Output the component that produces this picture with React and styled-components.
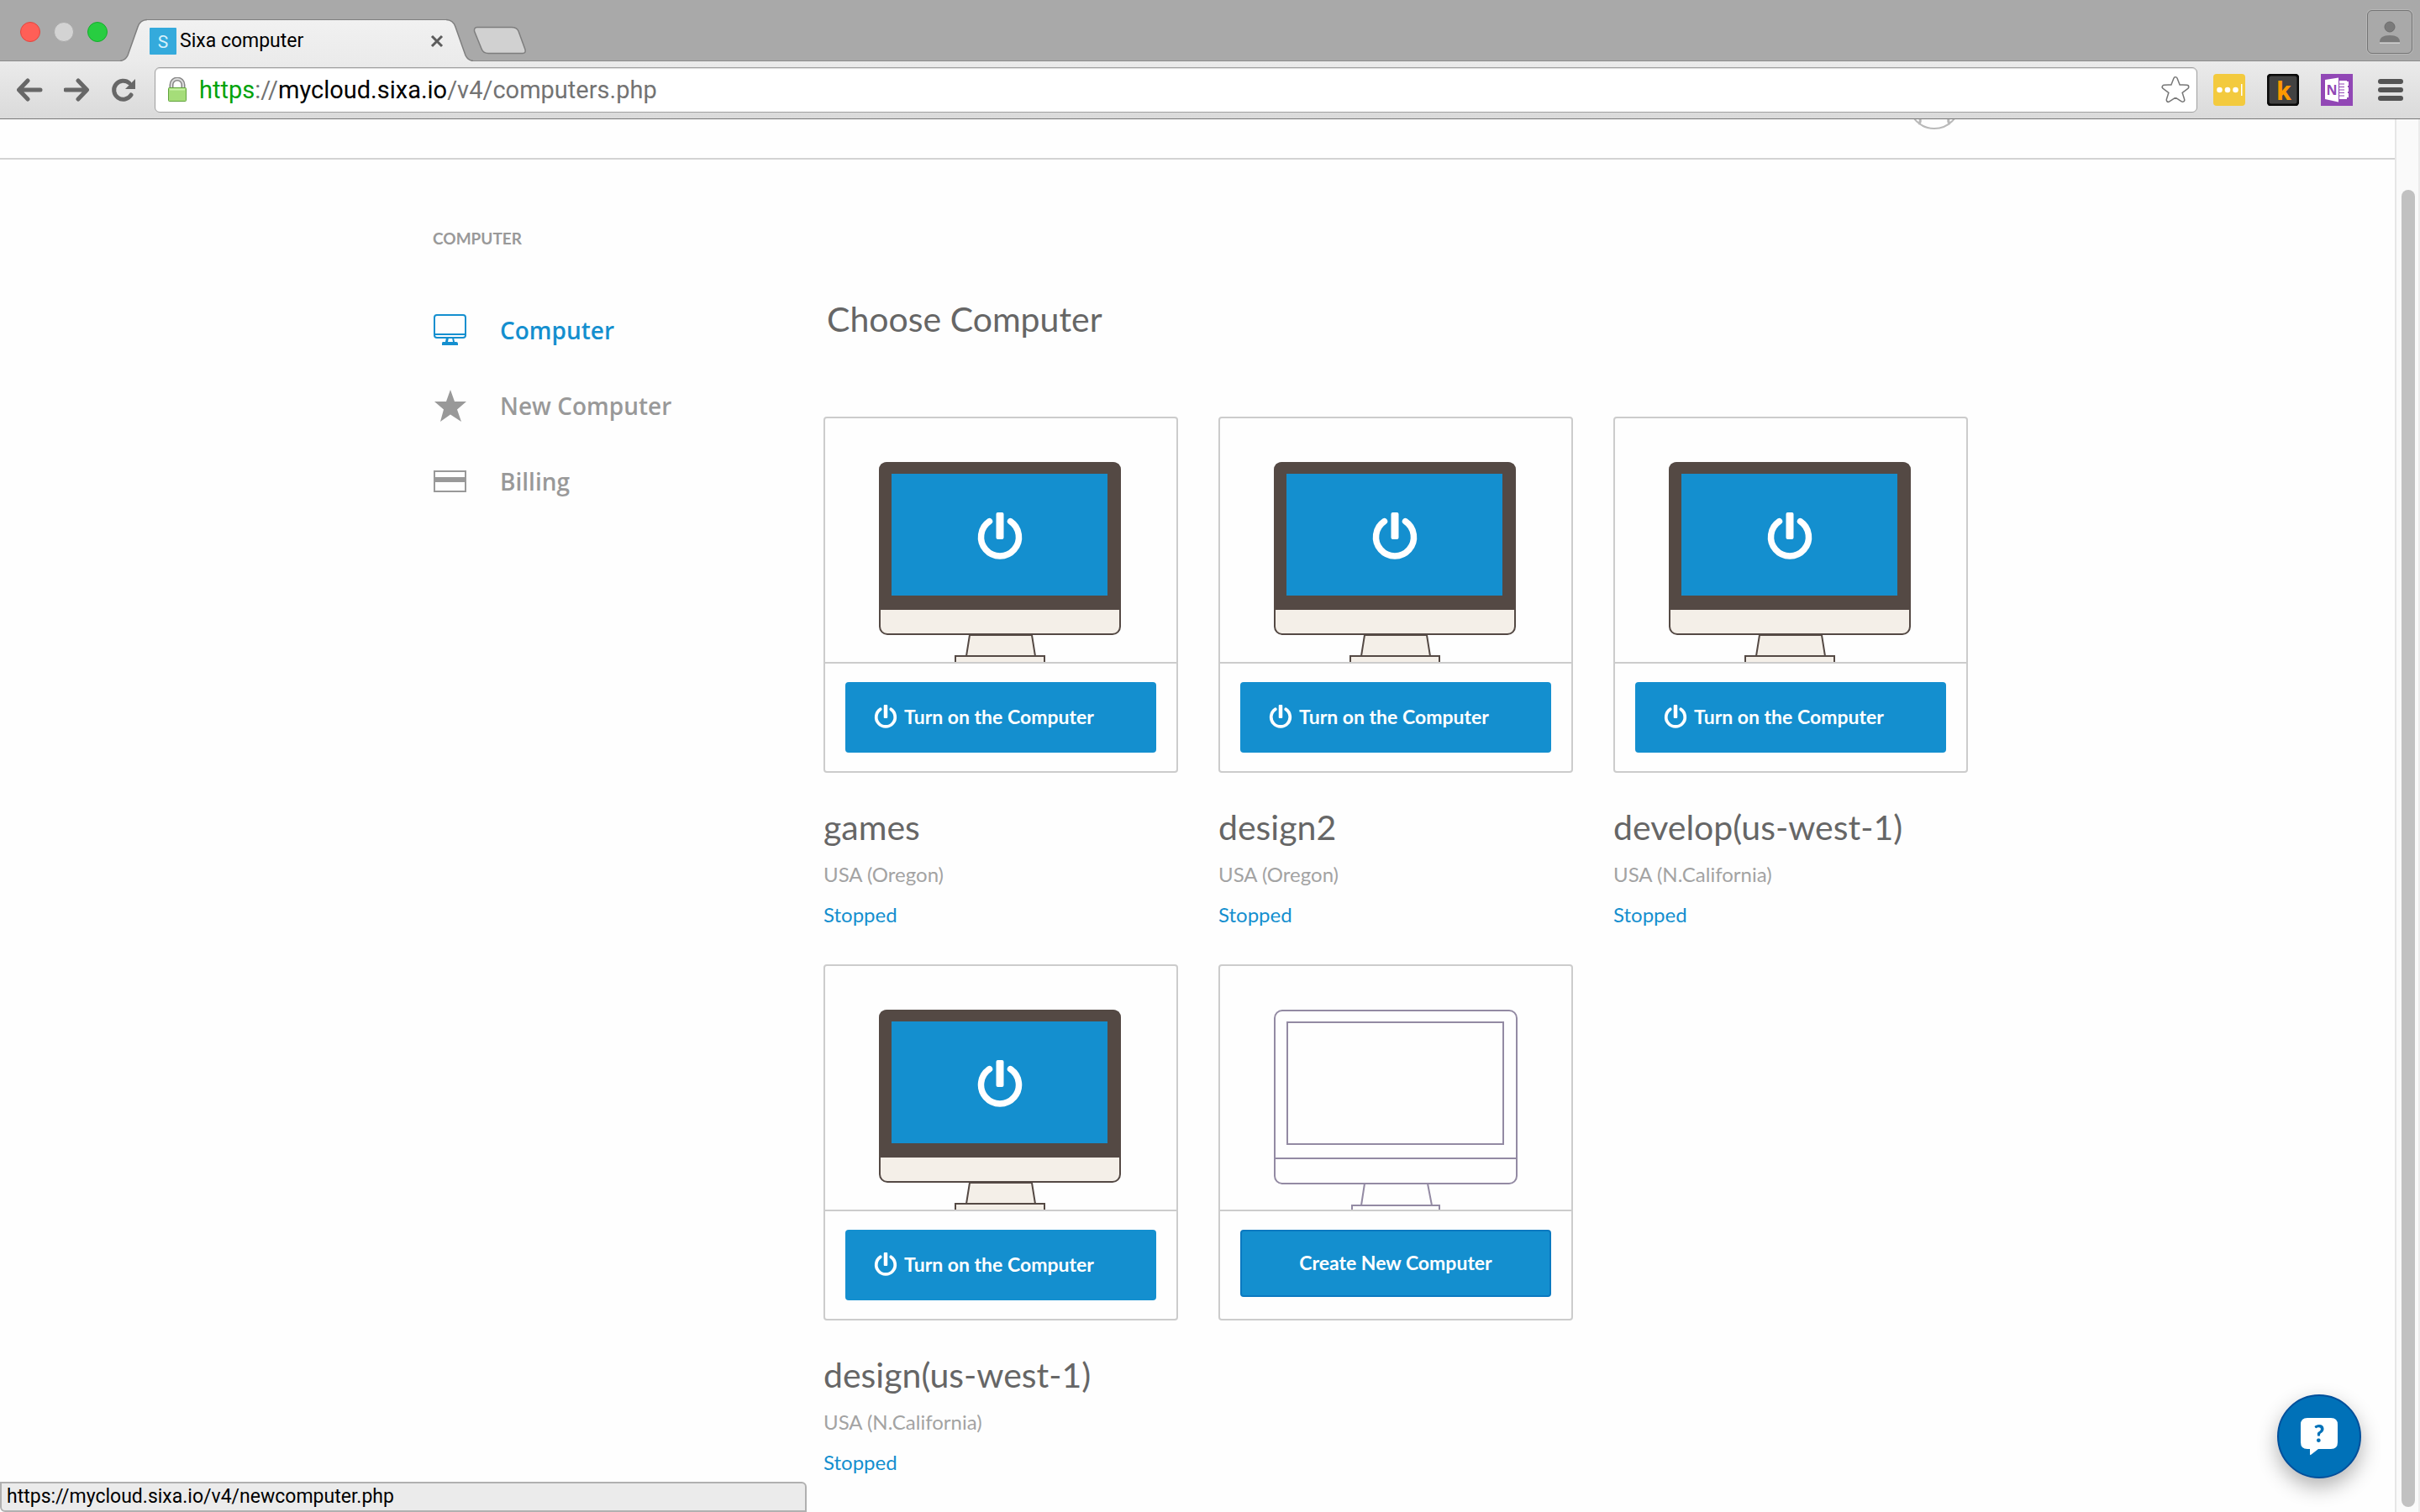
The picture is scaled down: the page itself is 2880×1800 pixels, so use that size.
import React from "react"
import styled, { createGlobalStyle } from "styled-components"

const computers = [
  { name: "games", region: "USA (Oregon)", status: "Stopped" },
  { name: "design2", region: "USA (Oregon)", status: "Stopped" },
  { name: "develop(us-west-1)", region: "USA (N.California)", status: "Stopped" },
  { name: "design(us-west-1)", region: "USA (N.California)", status: "Stopped" },
]

const App = () => {
  return (
    <Window>
      <GlobalStyle />
      <TabStrip>
        <Lights>
          <Light aria-label="Close window" color="#ff5f57" $edge="#e2463f" />
          <Light aria-label="Minimize window" color="#d3d3d3" $edge="#a9a9a9" />
          <Light aria-label="Zoom window" color="#28cd41" $edge="#14ae2c" />
        </Lights>
        <Tab>
          <TabEdge />
          <TabBody>
            <Favicon />
            <TabTitle>Sixa computer</TabTitle>
            <IconButton aria-label="Close tab">
              <svg width="16" height="16" viewBox="0 0 16 16">
                <path d="M2 2L14 14M14 2L2 14" stroke="#5c5c5c" strokeWidth="3" />
              </svg>
            </IconButton>
          </TabBody>
          <TabEdge right />
        </Tab>
        <NewTab aria-label="New tab">
          <svg width="64" height="34" viewBox="0 0 64 34">
            <path
              d="M5 1.500H46Q52 1.500 54 6L62 28Q63 32.500 59 32.500H18Q12 32.500 10 27L1.500 6Q1 1.500 5 1.500Z"
              fill="#d1d1d1"
              stroke="#7e7e7e"
              strokeWidth="1.500"
            />
          </svg>
        </NewTab>
        <Profile aria-label="Profile">
          <svg width="28" height="28" viewBox="0 0 28 28">
            <path d="M2 27.500H26" stroke="#d0d0d0" strokeWidth="1.500" />
            <circle cx="14" cy="8" r="6" fill="#7a7a7a" stroke="#6c6c6c" />
            <path d="M2 26Q2 18 14 18T26 26Z" fill="#7a7a7a" />
          </svg>
        </Profile>
      </TabStrip>

      <Toolbar>
        <NavButtons>
          <IconButton aria-label="Back">
            <ArrowIcon />
          </IconButton>
          <IconButton aria-label="Forward">
            <ArrowIcon forward />
          </IconButton>
          <IconButton aria-label="Reload">
            <ReloadIcon />
          </IconButton>
        </NavButtons>
        <AddressBar>
          <LockIcon />
          <Url role="textbox" aria-label="Address" tabIndex={0}>
            <Scheme>https</Scheme>://<Host>mycloud.sixa.io</Host>/v4/computers.php
          </Url>
          <IconButton aria-label="Bookmark this page">
            <BookmarkIcon />
          </IconButton>
        </AddressBar>
        <Extensions>
          <IconButton aria-label="Passwords">
            <PasswordsIcon />
          </IconButton>
          <IconButton aria-label="Kindle">
            <KindleIcon />
          </IconButton>
          <IconButton aria-label="OneNote">
            <OneNoteIcon />
          </IconButton>
          <IconButton aria-label="Menu">
            <MenuIcon />
          </IconButton>
        </Extensions>
      </Toolbar>

      <Viewport>
        <Page>
          <PageHeader>
            <AvatarIcon />
          </PageHeader>
          <Container>
            <Sidebar>
              <SidebarTitle>COMPUTER</SidebarTitle>
              <NavItem href="#computer" $active>
                <MonitorIcon />
                Computer
              </NavItem>
              <NavItem href="#new">
                <StarIcon />
                New Computer
              </NavItem>
              <NavItem href="#billing">
                <CardIcon />
                Billing
              </NavItem>
            </Sidebar>
            <Main>
              <Heading>Choose Computer</Heading>
              <Grid>
                {computers.map(c => (
                  <article key={c.name}>
                    <Card>
                      <CardPicture>
                        <ComputerPicture />
                      </CardPicture>
                      <CardFooter>
                        <PowerButton>
                          <PowerIcon size={28} />
                          Turn on the Computer
                        </PowerButton>
                      </CardFooter>
                    </Card>
                    <Name>{c.name}</Name>
                    <Meta>{c.region}</Meta>
                    <Meta $status>{c.status}</Meta>
                  </article>
                ))}
                <article>
                  <Card>
                    <CardPicture>
                      <EmptyPicture />
                    </CardPicture>
                    <CardFooter>
                      <CreateButton>Create New Computer</CreateButton>
                    </CardFooter>
                  </Card>
                </article>
              </Grid>
            </Main>
          </Container>
        </Page>
        <ScrollTrack>
          <ScrollThumb />
        </ScrollTrack>
      </Viewport>

      <ChatButton aria-label="Help">
        <svg width="46" height="46" viewBox="0 0 46 46">
          <path
            d="M9 1H37Q45 1 45 9V30Q45 38 37 38H22L13 45Q12 45.500 12 44V38H9Q1 38 1 30V9Q1 1 9 1Z"
            fill="#fff"
          />
          <text
            x="23"
            y="30"
            textAnchor="middle"
            fontFamily="Lato, sans-serif"
            fontWeight="900"
            fontSize="28"
            fill="#0071b8"
          >
            ?
          </text>
        </svg>
      </ChatButton>
      <StatusBar>https://mycloud.sixa.io/v4/newcomputer.php</StatusBar>
    </Window>
  )
}

export default App

// browser icons

const TabEdge = ({ right }) => (
  <svg width="32" height="51" viewBox="0 0 32 51">
    <defs>
      <linearGradient id="tabFill" x1="0" y1="0" x2="0" y2="1">
        <stop offset="0" stopColor="#f1f1f1" />
        <stop offset="1" stopColor="#ebebeb" />
      </linearGradient>
    </defs>
    <g transform={right ? "translate(32 0) scale(-1 1)" : undefined}>
      <path d="M0 51C5 50 7 48 9 44L21 10C23 4 26 1 32 1V51Z" fill="url(#tabFill)" />
      <path
        d="M0 50.500C5 50 7 48 9 44L21 10C23 4 26 1.500 32 1.500"
        fill="none"
        stroke="#7f7f7f"
        strokeWidth="1.500"
      />
    </g>
  </svg>
)

const Favicon = () => (
  <svg width="32" height="32" viewBox="0 0 32 32">
    <rect width="32" height="32" rx="1" fill="#34aadc" />
    <text
      x="16"
      y="24"
      textAnchor="middle"
      fontFamily="Roboto, sans-serif"
      fontSize="21"
      fill="#d8f1fb"
    >
      S
    </text>
  </svg>
)

const ArrowIcon = ({ forward }) => (
  <svg width="32" height="30" viewBox="0 0 32 30">
    <path
      d={forward ? "M2 15H27M17 4L27.500 15L17 26" : "M28 15H3M13 4L2.500 15L13 26"}
      fill="none"
      stroke="#676767"
      strokeWidth="5"
      strokeLinecap="round"
      strokeLinejoin="round"
    />
  </svg>
)

const ReloadIcon = () => (
  <svg width="30" height="30" viewBox="0 0 30 30">
    <path
      d="M24 21A11 11 0 1 1 22 7"
      fill="none"
      stroke="#676767"
      strokeWidth="5"
      strokeLinecap="round"
    />
    <path d="M29 2V14H17Z" fill="#676767" />
  </svg>
)

const LockIcon = () => (
  <svg width="24" height="30" viewBox="0 0 24 30">
    <path d="M5 13V9A7 7 0 0 1 19 9V13" fill="none" stroke="#858585" strokeWidth="5" />
    <path d="M5 13V9A7 7 0 0 1 19 9V13" fill="none" stroke="#dcdcdc" strokeWidth="2" />
    <rect x="1.500" y="12.500" width="21" height="16" rx="1" fill="#a5dd79" stroke="#61a33d" />
    <path d="M3 14.500H21" stroke="#c9f3a8" strokeWidth="2" />
  </svg>
)

const STAR = "M19 6L22.500 15L32.500 15.500L24.500 21.500L27.500 31L19 25.500L10.500 31L13.500 21.500L5.500 15.500L15.500 15Z"

const BookmarkIcon = () => (
  <svg width="38" height="38" viewBox="0 0 38 38" strokeLinejoin="round">
    <path d={STAR} fill="#777" stroke="#777" strokeWidth="6" />
    <path d={STAR} fill="#fff" stroke="#fff" strokeWidth="3" />
  </svg>
)

const PasswordsIcon = () => (
  <svg width="38" height="38" viewBox="0 0 38 38">
    <rect width="38" height="38" rx="4" fill="#f3ca3e" />
    <circle cx="7.500" cy="19" r="3.300" fill="#fff" />
    <circle cx="17" cy="19" r="3.300" fill="#fff" />
    <circle cx="26.500" cy="19" r="3.300" fill="#fff" />
    <rect x="33" y="12" width="1.500" height="14" fill="#fff" />
  </svg>
)

const KindleIcon = () => (
  <svg width="38" height="38" viewBox="0 0 38 38">
    <rect x="1" y="1" width="36" height="36" rx="4" fill="#424242" stroke="#0a0a0a" strokeWidth="3" />
    <text
      x="20"
      y="31"
      textAnchor="middle"
      fontFamily="Roboto, sans-serif"
      fontWeight="700"
      fontSize="32"
      fill="#f90"
    >
      k
    </text>
  </svg>
)

const OneNoteIcon = () => (
  <svg width="38" height="38" viewBox="0 0 38 38">
    <rect width="38" height="38" fill="#9147b5" />
    <path d="M22 8H31V30H22Z" fill="#fff" />
    <path d="M31 9H33V14H32V16H33V21H32V23H33V28H31Z" fill="#fff" />
    <path d="M22 12H28M22 15.500H28M22 19H28M22 22.500H28M22 26H28" stroke="#9147b5" strokeWidth="1.200" />
    <path d="M5 7L21 4.500V33.500L5 30Z" fill="#fff" />
    <text
      x="13"
      y="25"
      textAnchor="middle"
      fontFamily="'Open Sans', sans-serif"
      fontWeight="700"
      fontSize="16"
      fill="#9147b5"
    >
      N
    </text>
  </svg>
)

const MenuIcon = () => (
  <svg width="30" height="26" viewBox="0 0 30 26">
    <rect width="30" height="6" rx="3" fill="#545454" />
    <rect y="10" width="30" height="6" rx="3" fill="#545454" />
    <rect y="20" width="30" height="6" rx="3" fill="#545454" />
  </svg>
)

// page icons

const AvatarIcon = () => (
  <svg width="62" height="13" viewBox="0 0 62 13" fill="none" stroke="#b9b9b9">
    <circle cx="31" cy="-19" r="30" strokeWidth="2" />
    <path d="M14 0Q15 4 12 5M48 0Q47 4 50 5" strokeWidth="3" />
  </svg>
)

const MonitorIcon = () => (
  <svg width="40" height="38" viewBox="0 0 40 38">
    <rect x="2" y="1" width="37" height="27" rx="3" fill="none" stroke="#148fcf" strokeWidth="2" />
    <path d="M2 24H39" stroke="#148fcf" strokeWidth="2" />
    <path d="M16 28L15 33H12Q11 33 11 35V37H30V35Q30 33 28 33H26L25 28H23L24 33H18L19 28Z" fill="#148fcf" />
  </svg>
)

const StarIcon = () => (
  <svg width="40" height="40" viewBox="0 0 40 40">
    <path d="M21 1L26 15H40L29 24.500L34 39L21 30.500L9 39L13 24.500L2 15H16Z" fill="#999" />
  </svg>
)

const CardIcon = () => (
  <svg width="40" height="26" viewBox="0 0 40 26">
    <rect x="2" y="1" width="37" height="24" fill="none" stroke="#999" strokeWidth="2" />
    <rect x="2" y="8" width="37" height="6" fill="#999" />
  </svg>
)

const PowerIcon = ({ size }) => (
  <svg width={size} height={size} viewBox="0 0 56 56">
    <path
      d="M15.500 10.700A22.500 22.500 0 1 0 40.500 10.700"
      fill="none"
      stroke="#fff"
      strokeWidth="7.500"
      strokeLinecap="round"
    />
    <rect x="23.500" y="0" width="9" height="32" rx="2" fill="#fff" />
  </svg>
)

const ComputerPicture = () => (
  <svg width="288" height="238" viewBox="0 0 288 238">
    <path d="M108 206L104 231H186L182 206Z" fill="#f4efe8" stroke="#544944" strokeWidth="2" />
    <rect x="91" y="231" width="106" height="20" fill="#f4efe8" stroke="#544944" strokeWidth="2" />
    <rect x="1" y="1" width="286" height="204" rx="9" fill="#f4efe8" stroke="#544944" strokeWidth="2" />
    <path d="M0 176V10Q0 0 10 0H278Q288 0 288 10V176Z" fill="#544944" />
    <rect x="15" y="14" width="257" height="145" fill="#148fcf" />
    <svg x="116" y="60" width="56" height="56">
      <PowerIcon size={56} />
    </svg>
  </svg>
)

const EmptyPicture = () => (
  <svg width="290" height="238" viewBox="0 0 290 238" fill="none" stroke="#938aa3" strokeWidth="2">
    <rect x="1" y="1" width="288" height="206" rx="9" />
    <rect x="16" y="15" width="257" height="145" />
    <path d="M1 177H289M108 207L104 233M183 207L188 233" />
    <rect x="93" y="233" width="104" height="20" />
  </svg>
)

const GlobalStyle = createGlobalStyle`
  * {
    box-sizing: border-box;
  }

  body {
    margin: 0;
    font-family: Lato, "Open Sans", sans-serif;
    background: #fefefe;
  }

  svg {
    display: block;
    flex: none;
  }

  button {
    font-family: inherit;
    cursor: pointer;
  }
`

const Window = styled.div`
  display: flex;
  flex-direction: column;
  height: 100vh;
  overflow: hidden;
`

const TabStrip = styled.header`
  display: flex;
  flex: none;
  align-items: flex-end;
  height: 72px;
  padding-right: 9px;
  background: #a9a9a9;
`

const Lights = styled.div`
  display: flex;
  gap: 16px;
  padding: 0 15px 22px 24px;
`

const Light = styled.button`
  width: 24px;
  height: 24px;
  padding: 0;
  border: 1px solid ${props => props.$edge};
  border-radius: 50%;
  background: ${props => props.color};
`

const Tab = styled.div`
  display: flex;
  z-index: 1;
  margin-bottom: -1px;
  font-family: Roboto, sans-serif;
`

const TabBody = styled.div`
  display: flex;
  align-items: center;
  width: 356px;
  height: 50px;
  margin-top: 1px;
  padding: 0 3px;
  border-top: 1px solid #7f7f7f;
  background: linear-gradient(#f1f1f1, #ebebeb);
`

const TabTitle = styled.span`
  flex: 1;
  padding-left: 4px;
  font-size: 23px;
  line-height: 32px;
  color: #000;
`

const IconButton = styled.button`
  display: flex;
  padding: 0;
  border: 0;
  background: none;
`

const NewTab = styled(IconButton)`
  padding-bottom: 7px;
`

const Profile = styled(IconButton)`
  align-items: center;
  justify-content: center;
  width: 54px;
  height: 52px;
  margin: 0 0 8px auto;
  border: 1px solid #757575;
  border-radius: 6px;
  box-shadow: 0 0 0 1px #b8b8b8;
`

const Toolbar = styled.div`
  display: flex;
  flex: none;
  align-items: center;
  height: 70px;
  padding: 0 20px;
  border-top: 1px solid #8b8b8b;
  border-bottom: 1px solid #777;
  background: linear-gradient(#ebebeb, #dadada);
`

const NavButtons = styled.div`
  display: flex;
  align-items: center;
  gap: 24px;
  padding-right: 22px;
`

const AddressBar = styled.div`
  display: flex;
  flex: 1;
  align-items: center;
  height: 54px;
  padding: 0 6px 0 14px;
  border: 1px solid #a0a0a0;
  border-radius: 6px;
  background: #fff;
  box-shadow: inset 0 1px 1px #ddd;
`

const Url = styled.div`
  flex: 1;
  padding-left: 14px;
  font-family: Roboto, sans-serif;
  font-size: 29px;
  line-height: 40px;
  color: #737373;
`

const Scheme = styled.span`
  color: #00a30a;
`

const Host = styled.span`
  color: #000;
`

const Extensions = styled.div`
  display: flex;
  align-items: center;
  gap: 26px;
  padding-left: 19px;

  button:last-child {
    padding-left: 4px;
  }
`

const Viewport = styled.div`
  display: flex;
  flex: 1;
  min-height: 0;
`

const Page = styled.div`
  flex: 1;
  overflow: hidden;
`

const PageHeader = styled.div`
  display: flex;
  justify-content: flex-end;
  height: 48px;
  padding-right: 517px;
  border-bottom: 2px solid #d3d3d3;
`

const Container = styled.div`
  display: flex;
  max-width: 1836px;
  margin: 0 auto;
  padding-left: 8px;
`

const Sidebar = styled.nav`
  flex: 0 0 465px;
  padding-top: 82px;
`

const SidebarTitle = styled.h2`
  margin: 0 0 52px;
  font-size: 19px;
  line-height: 24px;
  font-weight: 700;
  color: #999;
`

const NavItem = styled.a`
  display: flex;
  align-items: center;
  gap: 40px;
  height: 90px;
  font-family: "Open Sans", sans-serif;
  font-size: 28px;
  font-weight: 600;
  color: ${props => (props.$active ? "#148fcf" : "#999")};
  text-decoration: none;
`

const Main = styled.main`
  flex: 1;
  padding-top: 164px;
`

const Heading = styled.h1`
  margin: 0 0 90px;
  padding-left: 4px;
  font-size: 41px;
  line-height: 52px;
  font-weight: 400;
  color: #666;
`

const Grid = styled.div`
  display: grid;
  grid-template-columns: repeat(auto-fill, 422px);
  gap: 35px 48px;
`

const Card = styled.div`
  border: 2px solid #ccc;
  border-radius: 4px;
`

const CardPicture = styled.div`
  padding: 52px 0 0 64px;
  border-bottom: 2px solid #ccc;
`

const CardFooter = styled.div`
  height: 128px;
  padding: 22px 24px;
`

const PowerButton = styled.button`
  display: flex;
  align-items: center;
  gap: 8px;
  width: 100%;
  height: 84px;
  padding: 0 34px 2px;
  border: 0;
  border-radius: 4px;
  font-size: 23px;
  font-weight: 700;
  color: #fff;
  background: #148fcf;
`

const CreateButton = styled(PowerButton)`
  justify-content: center;
  height: 80px;
  border: 2px solid #0b79c0;
`

const Name = styled.h3`
  margin: 33px 0 0;
  font-size: 41px;
  line-height: 64px;
  font-weight: 400;
  color: #666;
`

const Meta = styled.p`
  margin: 0;
  font-size: 24px;
  line-height: 48px;
  color: ${props => (props.$status ? "#148fcf" : "#a3a3a3")};
`

const ScrollTrack = styled.div`
  flex: 0 0 30px;
  padding: 84px 4px 6px 6px;
  border-left: 2px solid #e6e6e6;
  border-right: 2px solid #ececec;
  background: #fafafa;
`

const ScrollThumb = styled.div`
  width: 16px;
  height: 100%;
  border-radius: 8px;
  background: #c1c1c1;
`

const ChatButton = styled.button`
  position: fixed;
  right: 70px;
  bottom: 40px;
  display: flex;
  align-items: center;
  justify-content: center;
  width: 100px;
  height: 100px;
  padding: 0;
  border: 2px solid #004f9b;
  border-radius: 50%;
  background: #0071b8;
  box-shadow: 0 10px 24px rgba(0, 0, 0, 0.3);
`

const StatusBar = styled.div`
  position: fixed;
  left: 0;
  bottom: 0;
  width: 960px;
  height: 36px;
  padding-left: 6px;
  border: 2px solid #b0b0b0;
  border-radius: 0 6px 0 6px;
  font-family: Roboto, sans-serif;
  font-size: 23px;
  line-height: 32px;
  color: #000;
  background: #ebebeb;
`
